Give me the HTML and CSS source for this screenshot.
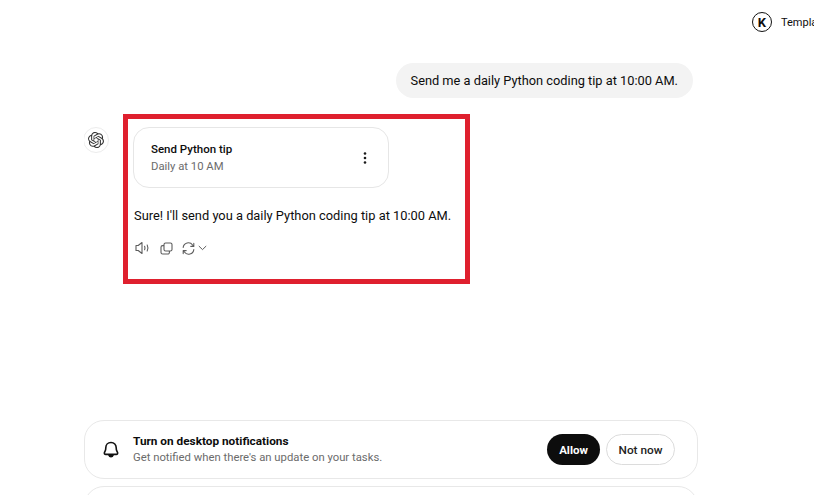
FILE: index.html
```html
<!DOCTYPE html>
<html lang="en">
<head>
    <meta charset="UTF-8">
    <title>Scheduled task</title>
    <link rel="stylesheet" href="styles.css">
</head>
<body>
    <div class="topbar">
        <span class="account">K</span>
        <span class="topbar-label">Templates</span>
    </div>

    <div class="chat">
        <div class="user-row">
            <div class="user-bubble">Send me a daily Python coding tip at 10:00 AM.</div>
        </div>

        <div class="reply-row">
            <div class="avatar">
                <svg width="16" height="16" viewBox="0 0 24 24" fill="#333333"><path d="M22.2819 9.8211a5.9847 5.9847 0 0 0-.5157-4.9108 6.0462 6.0462 0 0 0-6.5098-2.9A6.0651 6.0651 0 0 0 4.9807 4.1818a5.9847 5.9847 0 0 0-3.9977 2.9 6.0462 6.0462 0 0 0 .7427 7.0966 5.98 5.98 0 0 0 .511 4.9107 6.051 6.051 0 0 0 6.5146 2.9001A5.9847 5.9847 0 0 0 13.2599 24a6.0557 6.0557 0 0 0 5.7718-4.2058 5.9894 5.9894 0 0 0 3.9977-2.9001 6.0557 6.0557 0 0 0-.7475-7.0729zm-9.022 12.6081a4.4755 4.4755 0 0 1-2.8764-1.0408l.1419-.0804 4.7783-2.7582a.7948.7948 0 0 0 .3927-.6813v-6.7369l2.02 1.1686a.071.071 0 0 1 .038.052v5.5826a4.504 4.504 0 0 1-4.4945 4.4944zm-9.6607-4.1254a4.4708 4.4708 0 0 1-.5346-3.0137l.142.0852 4.783 2.7582a.7712.7712 0 0 0 .7806 0l5.8428-3.3685v2.3324a.0804.0804 0 0 1-.0332.0615L9.74 19.9502a4.4992 4.4992 0 0 1-6.1408-1.6464zM2.3408 7.8956a4.485 4.485 0 0 1 2.3655-1.9728V11.6a.7664.7664 0 0 0 .3879.6765l5.8144 3.3543-2.0201 1.1685a.0757.0757 0 0 1-.071 0l-4.8303-2.7865A4.504 4.504 0 0 1 2.3408 7.872zm16.5963 3.8558L13.1038 8.364 15.1192 7.2a.0757.0757 0 0 1 .071 0l4.8303 2.7913a4.4944 4.4944 0 0 1-.6765 8.1042v-5.6772a.79.79 0 0 0-.407-.667zm2.0107-3.0231l-.142-.0852-4.7735-2.7818a.7759.7759 0 0 0-.7854 0L9.409 9.2297V6.8974a.0662.0662 0 0 1 .0284-.0615l4.8303-2.7866a4.4992 4.4992 0 0 1 6.6802 4.66zM8.3065 12.863l-2.02-1.1638a.0804.0804 0 0 1-.038-.0567V6.0742a4.4992 4.4992 0 0 1 7.3757-3.4537l-.142.0805L8.704 5.459a.7948.7948 0 0 0-.3927.6813zm1.0976-2.3654l2.602-1.4998 2.6069 1.4998v2.9994l-2.5974 1.4997-2.6067-1.4997Z"/></svg>
            </div>

            <div class="highlight-box">
                <div class="task-card">
                    <div class="task-info">
                        <div class="task-title">Send Python tip</div>
                        <div class="task-time">Daily at 10 AM</div>
                    </div>
                    <svg class="task-menu" width="4" height="14" viewBox="0 0 4 14" fill="#1a1a1a">
                        <circle cx="2" cy="2.5" r="1.3"/>
                        <circle cx="2" cy="7" r="1.3"/>
                        <circle cx="2" cy="11.5" r="1.3"/>
                    </svg>
                </div>

                <p class="reply-text">Sure! I'll send you a daily Python coding tip at 10:00 AM.</p>

                <div class="reply-actions">
                    <svg width="15" height="14" viewBox="0 0 15 14" fill="none" stroke="#5d5d5d" stroke-width="1.1">
                        <path d="M1 4.500h2.200L7 1.500v11L3.200 9.500H1z" stroke-linejoin="round"/>
                        <path d="M9.600 5.200c.5 1.100.5 2.500 0 3.600M12.200 4c.9 1.800.9 4.200 0 6" stroke-linecap="round"/>
                    </svg>
                    <svg class="icon-copy" width="13" height="13" viewBox="0 0 13 13" fill="none" stroke="#5d5d5d" stroke-width="1.1">
                        <rect x="4" y="1" width="8" height="8" rx="1.6"/>
                        <path d="M4 3.600H2.600A1.600 1.600 0 0 0 1 5.200v5.200A1.600 1.600 0 0 0 2.600 12h5.200a1.600 1.600 0 0 0 1.600-1.600V9"/>
                    </svg>
                    <svg class="icon-retry" width="13" height="13" viewBox="0 0 13 13" fill="none" stroke="#5d5d5d" stroke-width="1.1" stroke-linecap="round" stroke-linejoin="round">
                        <path d="M1.200 5.400A5.200 5.200 0 0 1 10.600 3l1.200 1.400M11.800 1.400v3H8.800"/>
                        <path d="M11.800 7.600A5.200 5.200 0 0 1 2.400 10L1.200 8.600M1.200 11.600v-3h3"/>
                    </svg>
                    <svg class="icon-chevron" width="9" height="6" viewBox="0 0 9 6" fill="none" stroke="#5d5d5d" stroke-width="1">
                        <path d="M.8 1l3.700 3.600L8.200 1"/>
                    </svg>
                </div>
            </div>
        </div>

        <div class="notice">
            <svg class="notice-bell" width="16" height="18" viewBox="0 0 16 18" fill="none" stroke="#111" stroke-width="1.6" stroke-linejoin="round">
                <path d="M8 1.500c-3.200 0-5.200 2.300-5.200 5.200 0 1.300-.1 2.300-.7 3.500l-.6 1.200c-.5 1 .1 2 1.200 2h10.600c1.100 0 1.700-1 1.200-2l-.6-1.200c-.6-1.200-.7-2.200-.7-3.500 0-2.900-2-5.200-5.200-5.200z"/>
                <path d="M6 14.300c.3 1 1 1.500 2 1.500s1.700-.5 2-1.500z" fill="#111"/>
            </svg>
            <div class="notice-text">
                <div class="notice-title">Turn on desktop notifications</div>
                <div class="notice-sub">Get notified when there's an update on your tasks.</div>
            </div>
            <button class="btn btn-dark">Allow</button>
            <button class="btn btn-light">Not now</button>
        </div>

        <div class="composer"></div>
    </div>
</body>
</html>
```

FILE: styles.css
```css
* {
    margin: 0;
    padding: 0;
    box-sizing: border-box;
}

html, body {
    height: 495px;
    overflow: hidden;
}

body {
    font-family: Roboto, "Noto Sans", sans-serif;
    background-color: #ffffff;
    color: #0d0d0d;
}

.topbar {
    display: flex;
    align-items: center;
    height: 44px;
    padding-left: 752px;
    white-space: nowrap;
}

.account {
    display: flex;
    align-items: center;
    justify-content: center;
    flex: none;
    width: 20px;
    height: 20px;
    border: 1.5px solid #111111;
    border-radius: 50%;
    font-size: 13px;
    font-weight: 700;
}

.topbar-label {
    margin-left: 9px;
    font-size: 11px;
}

.chat {
    width: 614px;
    height: 451px;
    margin-left: 84px;
    overflow: hidden;
}

.user-row {
    display: flex;
    justify-content: flex-end;
    margin: 19px 5px 16px 0;
}

.user-bubble {
    height: 35px;
    padding: 1px 15px 0;
    border-radius: 18px;
    background-color: #f3f3f3;
    font-size: 12.8px;
    line-height: 34px;
    white-space: nowrap;
}

.reply-row {
    display: flex;
    align-items: flex-start;
}

.avatar {
    display: flex;
    align-items: center;
    justify-content: center;
    width: 26px;
    height: 26px;
    margin: 13px 0 0 -1px;
    border: 1px solid #ececec;
    border-radius: 50%;
}

.highlight-box {
    width: 347px;
    height: 170px;
    margin-left: 14px;
    padding: 8px 5px 0;
    border: 5px solid #df202e;
}

.task-card {
    display: flex;
    align-items: center;
    justify-content: space-between;
    width: 256px;
    height: 61px;
    padding: 0 21px 0 17px;
    border: 1px solid #e6e6e6;
    border-radius: 16px;
}

.task-info {
    padding-top: 1px;
}

.task-title {
    font-size: 11.5px;
    font-weight: 500;
    line-height: 16px;
}

.task-time {
    margin-top: 2px;
    color: #6b6b6b;
    font-size: 11.3px;
    line-height: 16px;
}

.reply-text {
    margin-top: 19px;
    padding-left: 1px;
    font-size: 12.85px;
    line-height: 18px;
    white-space: nowrap;
}

.reply-actions {
    display: flex;
    align-items: center;
    margin-top: 16px;
    padding-left: 2px;
}

.icon-copy {
    margin-left: 10px;
}

.icon-retry {
    margin-left: 9px;
}

.icon-chevron {
    margin-left: 3px;
}

.notice {
    display: flex;
    align-items: center;
    height: 59px;
    margin-top: 136px;
    padding: 0 22px 0 18px;
    border: 1px solid #e8e8e8;
    border-radius: 20px;
}

.notice-bell {
    flex: none;
}

.notice-text {
    flex: 1;
    margin-left: 14px;
}

.notice-title {
    margin-top: -1px;
    font-size: 11.8px;
    font-weight: 700;
    line-height: 16px;
}

.notice-sub {
    margin-top: 1px;
    color: #6b6b6b;
    font-size: 11.3px;
    line-height: 16px;
}

.btn {
    height: 31px;
    border-radius: 16px;
    font-family: inherit;
    font-size: 11.5px;
}

.btn-dark {
    width: 53px;
    border: none;
    background-color: #0d0d0d;
    color: #ffffff;
    font-weight: 700;
}

.btn-light {
    width: 69px;
    margin-left: 6px;
    border: 1px solid #dcdcdc;
    background-color: #ffffff;
    color: #222222;
    font-size: 11.8px;
    font-weight: 500;
}

.composer {
    height: 60px;
    margin-top: 7px;
    border: 1px solid #e8e8e8;
    border-radius: 20px;
}
```
